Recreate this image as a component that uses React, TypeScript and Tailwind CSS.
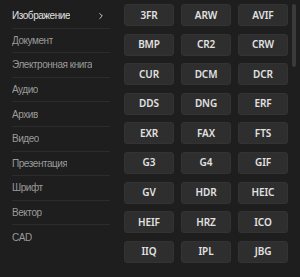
import { ChevronRight } from "lucide-react";

const categories = [
  "Изображение",
  "Документ",
  "Электронная книга",
  "Аудио",
  "Архив",
  "Видео",
  "Презентация",
  "Шрифт",
  "Вектор",
  "CAD",
];

const formats = [
  "3FR", "ARW", "AVIF",
  "BMP", "CR2", "CRW",
  "CUR", "DCM", "DCR",
  "DDS", "DNG", "ERF",
  "EXR", "FAX", "FTS",
  "G3", "G4", "GIF",
  "GV", "HDR", "HEIC",
  "HEIF", "HRZ", "ICO",
  "IIQ", "IPL", "JBG",
];

export default function App() {
  const active = 0;

  return (
    <div
      className="flex w-[300px] h-[277px] overflow-hidden bg-[#1e1e1e]"
      style={{ fontFamily: '"Noto Sans", "Open Sans", sans-serif' }}
    >
      {/* Category list */}
      <div
        className="w-[110px] shrink-0 pl-3 pt-1"
        style={{ fontFamily: '"Liberation Sans", Arial, sans-serif' }}
      >
        {categories.map((name, i) => (
          <div
            key={name}
            className={`flex items-center justify-between h-[24.6px] text-[10px] tracking-[-0.45px] ${
              i < categories.length - 1 ? "border-b border-[#2c2c2c]" : ""
            } ${i === active ? "text-[#e2e2e2]" : "text-[#9a9a9a]"}`}
          >
            <span className="truncate">{name}</span>
            {i === active && (
              <ChevronRight size={10} strokeWidth={2.2} className="mr-[4px] text-[#d8d8d8]" />
            )}
          </div>
        ))}
      </div>

      {/* Format grid */}
      <div className="relative flex-1 pl-[14px] pt-1">
        <div className="grid grid-cols-[50px_50px_50px] gap-x-[7px] gap-y-[7.6px]">
          {formats.map((f) => (
            <button
              key={f}
              className="h-[22px] rounded-[3px] bg-[#2e2e2e] border border-[#333333] text-[10px] font-semibold tracking-[-0.1px] text-[#e2e2e2] flex items-center justify-center"
            >
              {f}
            </button>
          ))}
        </div>

        {/* Scrollbar thumb */}
        <div className="absolute right-[4px] top-1 w-[4px] h-[63px] rounded-full bg-[#3a3a3a]" />
      </div>
    </div>
  );
}
